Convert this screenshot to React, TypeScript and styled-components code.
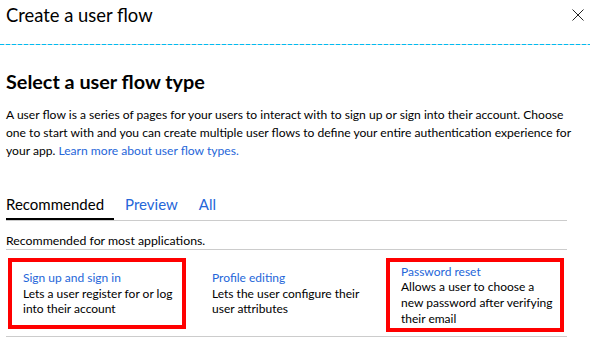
import React from 'react';
import styled, { createGlobalStyle } from 'styled-components';

const GlobalStyle = createGlobalStyle`
  html, body {
    margin: 0;
    padding: 0;
    background: #ffffff;
  }
  body {
    font-family: 'Lato', 'Open Sans', sans-serif;
    color: #000000;
  }
`;

const Blade = styled.div`
  width: 590px;
  height: 348px;
  overflow: hidden;
  background: #fff;
`;

const Header = styled.div`
  height: 44px;
  box-sizing: border-box;
  padding: 3px 6px 0 6px;
  display: flex;
  justify-content: space-between;
  align-items: flex-start;
`;

const Title = styled.h1`
  margin: 0;
  font-size: 18.4px;
  line-height: 24px;
  font-weight: 400;
  color: #000;
`;

const CloseButton = styled.button`
  border: 0;
  background: none;
  padding: 0;
  margin: 6px 0 0 0;
  width: 12px;
  height: 12px;
  cursor: pointer;
  display: block;
`;

const DashedRule = styled.div`
  height: 1px;
  background: repeating-linear-gradient(
    to right,
    #00bcf2 0px,
    #00bcf2 4px,
    #c8d8e0 4px,
    #c8d8e0 6px
  );
`;

const Content = styled.div`
  padding: 0 23px 0 6px;
`;

const Heading = styled.h2`
  margin: 23px 0 0 0;
  font-size: 19.8px;
  line-height: 26px;
  font-weight: 700;
`;

const Intro = styled.p`
  margin: 12px -9px 0 0;
  font-size: 12.1px;
  line-height: 18px;
`;

const Link = styled.a`
  color: #2566d9;
  text-decoration: none;
`;

const TabBar = styled.div`
  margin-top: 34px;
  display: flex;
  border-bottom: 1px solid #cccccc;
`;

const Tab = styled.div<{ $active?: boolean }>`
  padding: 0 10px 4px 0;
  margin-right: 11px;
  font-size: 15px;
  line-height: 20px;
  color: ${p => (p.$active ? '#000' : '#2566d9')};
  border-bottom: 2px solid ${p => (p.$active ? '#000' : 'transparent')};
  cursor: pointer;
`;

const Note = styled.div`
  margin-top: 11px;
  font-size: 12.3px;
  line-height: 17px;
  border-bottom: 1px solid #cccccc;
`;

const CardRow = styled.div`
  display: grid;
  grid-template-columns: repeat(3, 178px);
  column-gap: 11px;
  align-items: start;
  padding: 8px 0 4px 2px;
  border-bottom: 1px solid #cccccc;
`;

const Card = styled.div<{ $highlight?: boolean; $height: number }>`
  box-sizing: border-box;
  height: ${p => p.$height}px;
  border: 4px solid ${p => (p.$highlight ? '#ff0000' : 'transparent')};
  padding: 0 4px 0 11px;
  display: flex;
  flex-direction: column;
  justify-content: center;
  font-size: 12px;
  line-height: 15.6px;
`;

const CardTitle = styled.a`
  color: #2566d9;
  text-decoration: none;
`;

const CardText = styled.div`
  color: #000;
`;

const flows = [
  {
    title: 'Sign up and sign in',
    text: 'Lets a user register for or log into their account',
    highlight: true,
    height: 71,
  },
  {
    title: 'Profile editing',
    text: 'Lets the user configure their user attributes',
    highlight: false,
    height: 71,
  },
  {
    title: 'Password reset',
    text: 'Allows a user to choose a new password after verifying their email',
    highlight: true,
    height: 74,
  },
];

export default function App() {
  return (
    <>
      <GlobalStyle />
      <Blade>
        <Header>
          <Title>Create a user flow</Title>
          <CloseButton aria-label="Close">
            <svg width="12" height="12" viewBox="0 0 12 12">
              <path d="M0.5 0.5 L11.5 11.5 M11.5 0.5 L0.5 11.5" stroke="#222" strokeWidth="1" />
            </svg>
          </CloseButton>
        </Header>
        <DashedRule />
        <Content>
          <Heading>Select a user flow type</Heading>
          <Intro>
            A user flow is a series of pages for your users to interact with to sign up or sign into
            their account. Choose one to start with and you can create multiple user flows to define
            your entire authentication experience for your app.{' '}
            <Link href="#">Learn more about user flow types.</Link>
          </Intro>
          <TabBar>
            <Tab $active>Recommended</Tab>
            <Tab>Preview</Tab>
            <Tab>All</Tab>
          </TabBar>
          <Note>Recommended for most applications.</Note>
          <CardRow>
            {flows.map(f => (
              <Card key={f.title} $highlight={f.highlight} $height={f.height}>
                <CardTitle href="#">{f.title}</CardTitle>
                <CardText>{f.text}</CardText>
              </Card>
            ))}
          </CardRow>
        </Content>
      </Blade>
    </>
  );
}
